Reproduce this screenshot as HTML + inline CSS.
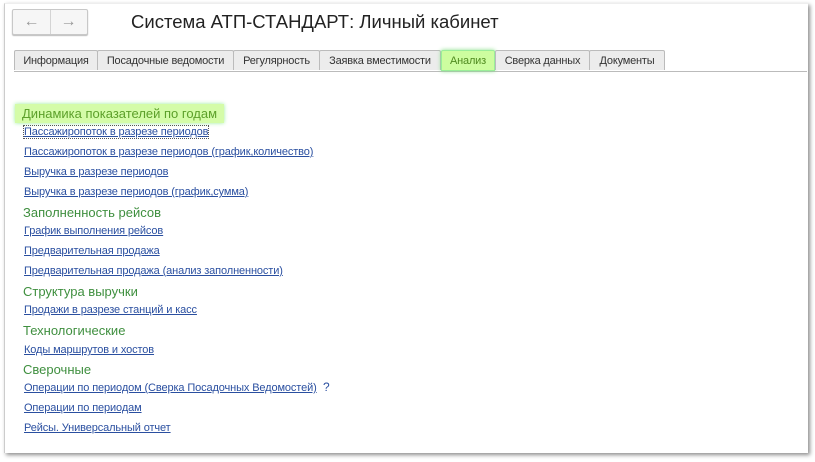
<!DOCTYPE html><html><head><meta charset="utf-8"><style>
body{margin:0;width:815px;height:462px;background:#fff;font-family:"Liberation Sans",sans-serif;position:relative;overflow:hidden}
.win{position:absolute;left:4px;top:3px;width:803px;height:449px;border-left:1px solid #ccc;border-top:1px solid #eee;box-shadow:2px 2px 4px rgba(0,0,0,.45);background:#fff}
.nav{position:absolute;left:12px;top:9px;width:74px;height:24px;border:1px solid #c8c8c8;border-radius:2px;background:#f6f6f6;box-shadow:0 1px 1px #bbb}
.nav div{position:absolute;top:0;width:37px;height:24px;text-align:center;line-height:23px;color:#999;font-size:16px}
.title{position:absolute;left:131px;top:11px;font-size:18.5px;color:#222}
.tab{position:absolute;top:50px;height:20px;border:1px solid #bbb;border-bottom:none;background:#ececec;font-size:11px;color:#333;line-height:21px;text-align:center;border-radius:2px 2px 0 0;box-sizing:border-box;letter-spacing:-.2px}
.line{position:absolute;left:14px;top:71px;width:793px;border-top:1px solid #bbb}
a{position:absolute;left:24px;font-size:11px;color:#2a4fa0;text-decoration:underline;letter-spacing:-.12px;white-space:nowrap}
.h{position:absolute;left:23px;font-size:13px;color:#3f8f3f;white-space:nowrap}
</style></head><body>
<div class="win"></div>
<div class="nav"><div style="left:0;border-right:1px solid #d4d4d4">&#8592;</div><div style="left:37px">&#8594;</div></div>
<div class="title">Система АТП-СТАНДАРТ: Личный кабинет</div>
<div class="line"></div>
<div class="tab" style="left:14px;width:84px">Информация</div>
<div class="tab" style="left:97px;width:137px">Посадочные ведомости</div>
<div class="tab" style="left:233px;width:87px">Регулярность</div>
<div class="tab" style="left:319px;width:122px">Заявка вместимости</div>
<div class="tab" style="left:441px;width:54px;height:21px;background:#cdfd9f;border:1px solid #9e9;color:#4f8a1f;box-shadow:0 0 4px #8d8">Анализ</div>
<div class="tab" style="left:495px;width:95px">Сверка данных</div>
<div class="tab" style="left:589px;width:76px">Документы</div>
<div class="h" style="left:15px;top:104px;padding:2px 7px;background:#d4fca8;color:#5ca02a;box-shadow:0 0 4px #9e9">Динамика показателей по годам</div>
<a style="top:126px;outline:1px dotted #555">Пассажиропоток в разрезе периодов</a>
<a style="top:146px">Пассажиропоток в разрезе периодов (график,количество)</a>
<a style="top:166px">Выручка в разрезе периодов</a>
<a style="top:186px">Выручка в разрезе периодов (график,сумма)</a>
<div class="h" style="top:205px">Заполненность рейсов</div>
<a style="top:225px">График выполнения рейсов</a>
<a style="top:245px">Предварительная продажа</a>
<a style="top:265px">Предварительная продажа (анализ заполненности)</a>
<div class="h" style="top:284px">Структура выручки</div>
<a style="top:304px">Продажи в разрезе станций и касс</a>
<div class="h" style="top:323px">Технологические</div>
<a style="top:344px">Коды маршрутов и хостов</a>
<div class="h" style="top:362px">Сверочные</div>
<a style="top:382px">Операции по периодом (Сверка Посадочных Ведомостей)</a>
<div style="position:absolute;left:323px;top:380px;font-size:12px;color:#2a4fa0">?</div>
<a style="top:402px">Операции по периодам</a>
<a style="top:422px">Рейсы. Универсальный отчет</a>
</body></html>
